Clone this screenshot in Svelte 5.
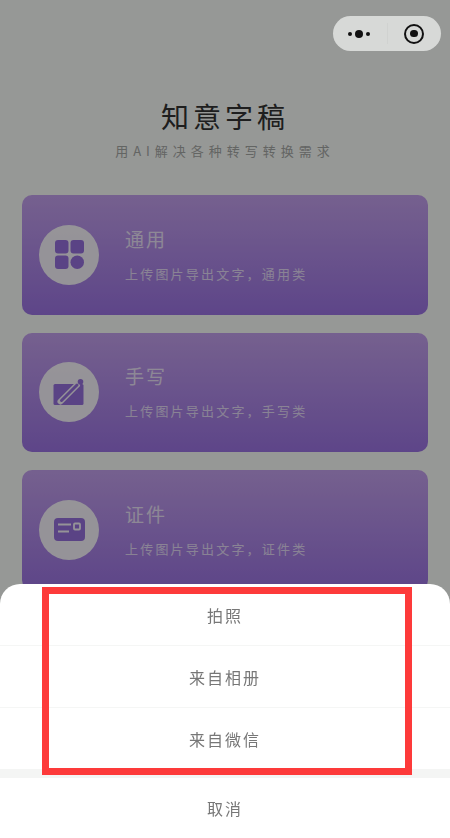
<script lang="ts">
  const cards = [
    { icon: "grid", title: "通用", desc: "上传图片导出文字，通用类" },
    { icon: "pen", title: "手写", desc: "上传图片导出文字，手写类" },
    { icon: "card", title: "证件", desc: "上传图片导出文字，证件类" },
  ];

  const sheetItems = ["拍照", "来自相册", "来自微信"];
</script>

<div class="page">
  <header class="hero">
    <h1>知意字稿</h1>
    <p>用AI解决各种转写转换需求</p>
  </header>

  <div class="card-list">
    {#each cards as card}
      <div class="card">
        <div class="icon-circle">
          {#if card.icon === "grid"}
            <svg viewBox="0 0 29 29" width="29" height="29">
              <rect x="0" y="0" width="13.500" height="13.500" rx="3" />
              <rect x="15.500" y="0" width="13.500" height="13.500" rx="3" />
              <rect x="0" y="15.500" width="13.500" height="13.500" rx="3" />
              <circle cx="22.250" cy="22.250" r="6.750" />
            </svg>
          {:else if card.icon === "pen"}
            <svg viewBox="0 0 32 28" width="32" height="28">
              <rect x="0.500" y="6" width="30" height="21" rx="1.500" />
              <path class="pen-edge" d="M7.500 23.500L24 7" />
              <path class="pen-core" d="M8.500 22.500L24 7" />
              <circle cx="27.500" cy="3.800" r="2.800" />
            </svg>
          {:else}
            <svg viewBox="0 0 31 23" width="31" height="23">
              <rect x="0" y="0" width="31" height="23" rx="4" />
              <rect class="line" x="4" y="5.500" width="13" height="2" />
              <rect class="line" x="4" y="12.500" width="11" height="2" />
              <rect class="hole" x="20" y="5.500" width="6" height="6" rx="1" />
            </svg>
          {/if}
        </div>
        <div class="card-text">
          <div class="card-title">{card.title}</div>
          <div class="card-desc">{card.desc}</div>
        </div>
      </div>
    {/each}
  </div>
</div>

<div class="mask"></div>

<div class="capsule">
  <span class="dots"><i></i><b></b><i></i></span>
  <span class="divider"></span>
  <span class="target"></span>
</div>

<div class="sheet">
  <div class="sheet-group">
    {#each sheetItems as item}
      <div class="sheet-item">{item}</div>
    {/each}
  </div>
  <div class="sheet-gap"></div>
  <div class="sheet-item cancel">取消</div>
</div>

<div class="highlight"></div>

<style>
  :global(body) {
    margin: 0;
    background: #fafcfa;
    font-family: "Noto Sans CJK SC", "Noto Sans", sans-serif;
  }

  .page {
    height: 838px;
    overflow: hidden;
    background: #fafdfa;
    box-sizing: border-box;
    padding: 95px 22px 0;
  }

  .hero {
    text-align: center;
    margin-bottom: 35px;
  }

  .hero h1 {
    margin: 0;
    font-size: 28px;
    line-height: 42px;
    font-weight: 400;
    letter-spacing: 4px;
    color: #333;
  }

  .hero p {
    margin: 5px 0 0;
    font-size: 13px;
    line-height: 18px;
    letter-spacing: 5px;
    color: #a6a8a6;
  }

  .card-list {
    display: flex;
    flex-direction: column;
    gap: 18px;
  }

  .card {
    height: 119.500px;
    display: flex;
    align-items: center;
    gap: 26px;
    padding-left: 17px;
    border-radius: 10px;
    background: linear-gradient(180deg, #c4a1ee, #9c74e4);
  }

  .icon-circle {
    width: 60px;
    height: 60px;
    border-radius: 50%;
    flex-shrink: 0;
    display: flex;
    align-items: center;
    justify-content: center;
    background: rgba(255, 255, 255, 0.92);
  }

  .icon-circle svg {
    fill: #9770de;
    display: block;
  }

  .icon-circle .pen-edge {
    fill: none;
    stroke: #f8f5fc;
    stroke-width: 6;
    stroke-linecap: round;
  }

  .icon-circle .pen-core {
    fill: none;
    stroke: #9770de;
    stroke-width: 3;
    stroke-linecap: round;
  }

  .icon-circle .line {
    fill: #f8f5fc;
  }

  .icon-circle .hole {
    fill: none;
    stroke: #f8f5fc;
    stroke-width: 1.800;
  }

  .card-text {
    padding-bottom: 2px;
  }

  .card-title {
    font-size: 19px;
    line-height: 28px;
    letter-spacing: 2px;
    color: #fff;
    opacity: 0.75;
  }

  .card-desc {
    margin-top: 12px;
    font-size: 13px;
    line-height: 18px;
    letter-spacing: 2.200px;
    color: #fff;
    opacity: 0.7;
  }

  .mask {
    position: fixed;
    inset: 0;
    background: rgba(0, 0, 0, 0.4);
  }

  .capsule {
    position: fixed;
    top: 16px;
    left: 333px;
    width: 108px;
    height: 35px;
    box-sizing: border-box;
    border-radius: 18px;
    background: #d7d9d7;
    display: flex;
    align-items: center;
  }

  .dots {
    width: 52px;
    display: flex;
    align-items: center;
    justify-content: center;
    gap: 3px;
  }

  .dots i {
    width: 4px;
    height: 4px;
    border-radius: 50%;
    background: #111;
  }

  .dots b {
    width: 8px;
    height: 8px;
    border-radius: 50%;
    background: #111;
  }

  .divider {
    width: 1px;
    height: 21px;
    margin-left: 2px;
    background: #d0d2d0;
  }

  .target {
    width: 20px;
    height: 20px;
    box-sizing: border-box;
    margin-left: 16px;
    border-radius: 50%;
    border: 2.500px solid #111;
    display: flex;
    align-items: center;
    justify-content: center;
  }

  .target::after {
    content: "";
    width: 7.500px;
    height: 7.500px;
    border-radius: 50%;
    background: #111;
  }

  .sheet {
    position: fixed;
    left: 0;
    right: 0;
    bottom: 0;
    background: #fff;
    border-radius: 20px 20px 0 0;
    overflow: hidden;
  }

  .sheet-item {
    height: 61px;
    display: flex;
    align-items: center;
    justify-content: center;
    border-bottom: 1px solid #f5f6f5;
    font-size: 16px;
    letter-spacing: 2px;
    color: #777;
  }

  .sheet-group .sheet-item:last-child {
    border-bottom: none;
  }

  .sheet-gap {
    height: 9px;
    background: #f4f5f4;
  }

  .cancel {
    height: 60px;
    border-bottom: none;
  }

  .highlight {
    position: fixed;
    left: 42px;
    top: 587px;
    width: 370px;
    height: 188px;
    box-sizing: border-box;
    border: 7px solid #fd3a3a;
  }
</style>
